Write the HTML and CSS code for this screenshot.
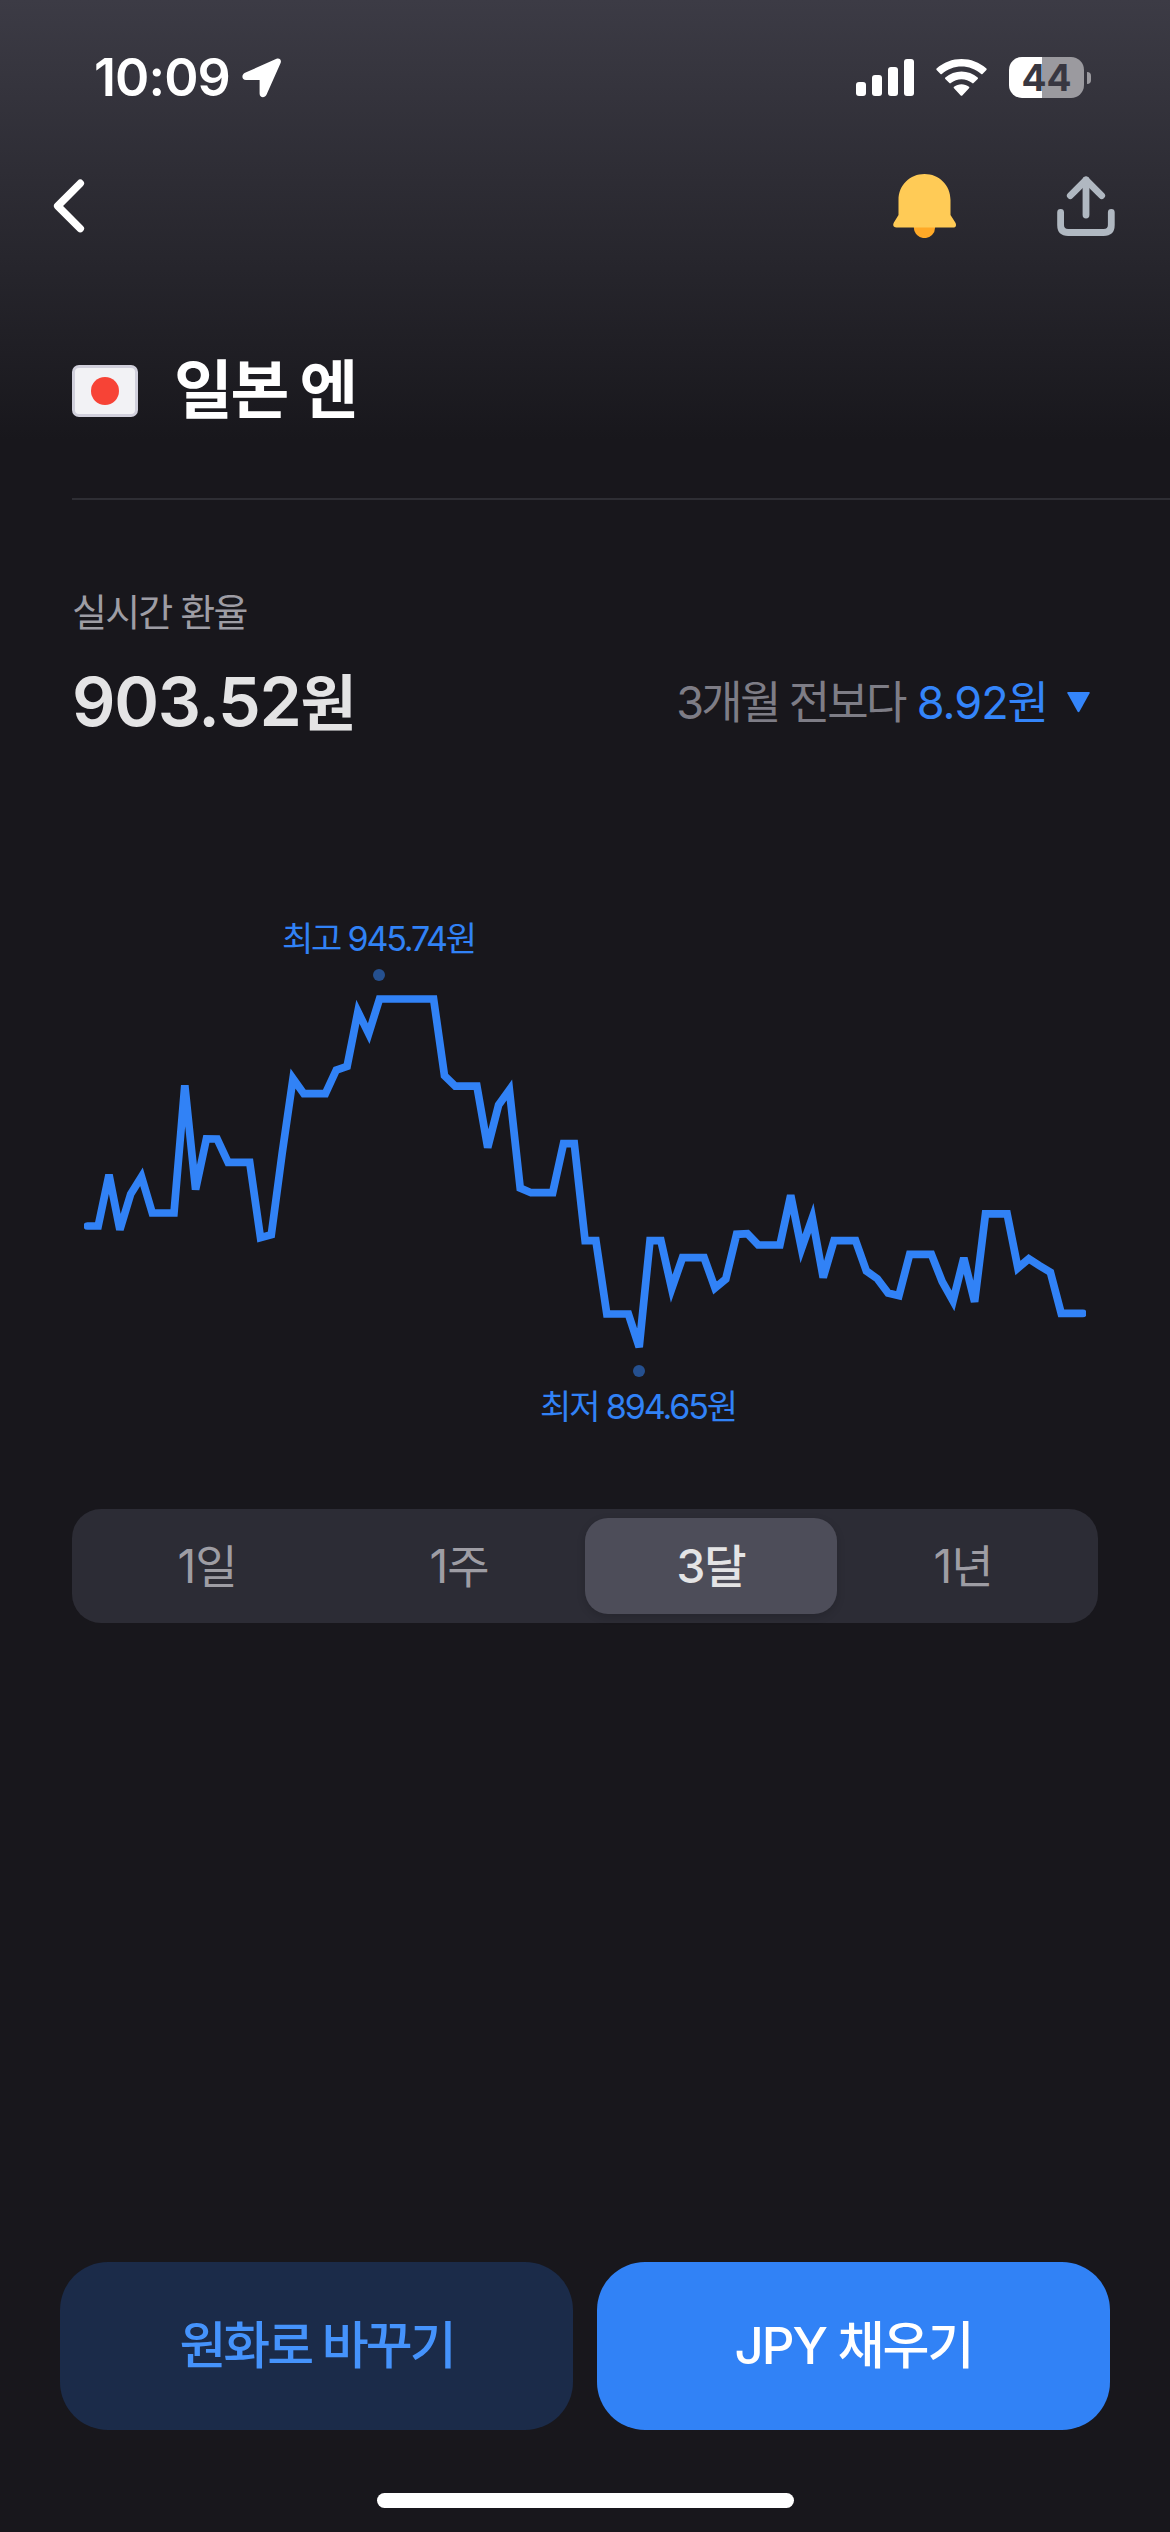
FILE: index.html
```html
<!DOCTYPE html>
<html lang="ko">
<head>
	<meta charset="utf-8">
	<meta name="viewport" content="width=device-width">
	<title>일본 엔</title>
	<link rel="stylesheet" href="styles.css">
</head>
<body>
	<div class="screen">
		<!-- status bar -->
		<div class="status-bar">
			<span class="time">10:09</span>
			<svg class="location" width="40" height="40" viewBox="0 0 40 40">
				<path d="M34.500 .8 L3 14.800 C-.8 16.500 -.4 22 4 22 L17.600 22 L17.600 35.500 C17.600 40 22.800 40.500 24.500 36.800 L38.600 5 C39.800 2.200 37.500 -.4 34.500 .8Z" fill="#fff"/>
			</svg>
			<div class="status-icons">
				<svg width="58" height="37" viewBox="0 0 58 37" fill="#fff">
					<rect x="0" y="23" width="10" height="14" rx="3"/>
					<rect x="16" y="16" width="10" height="21" rx="3"/>
					<rect x="32" y="8" width="10" height="29" rx="3"/>
					<rect x="48" y="0" width="10" height="37" rx="3"/>
				</svg>
				<svg width="51" height="37" viewBox="0 0 51 37" fill="#fff">
					<path d="M.6 9.600 C14.500 -3.200 36.500 -3.200 50.400 9.600 Q51 10.200 50.400 10.900 L46.500 15 Q45.900 15.600 45.200 15 C34 5 17 5 5.800 15 Q5.100 15.600 4.500 15 L.6 10.900 Q0 10.200 .6 9.600Z"/>
					<path d="M9.300 18.600 C18.300 10.500 32.700 10.500 41.700 18.600 Q42.400 19.300 41.700 20 L37.600 24.100 Q36.900 24.700 36.200 24.100 C30 18.800 21 18.800 14.800 24.100 Q14.100 24.700 13.400 24.100 L9.300 20 Q8.600 19.300 9.300 18.600Z"/>
					<path d="M18 27.800 C22.300 24.400 28.700 24.400 33 27.800 Q33.700 28.500 33 29.200 L26.300 36.400 Q25.500 37.200 24.700 36.400 L18 29.200 Q17.300 28.500 18 27.800Z"/>
				</svg>
				<div class="battery">
					<div class="battery-body">44</div>
					<div class="battery-tip"></div>
				</div>
			</div>
		</div>

		<!-- navigation -->
		<div class="nav">
			<svg width="34" height="56" viewBox="0 0 34 56" fill="none" stroke="#fff" stroke-width="7.500" stroke-linecap="round" stroke-linejoin="round">
				<path d="M28.300 5.300 L5.700 28 L28.300 50.600"/>
			</svg>
			<div class="nav-actions">
				<svg width="64" height="64" viewBox="0 0 64 64">
					<circle cx="31.500" cy="53.500" r="10.600" fill="#ffa927"/>
					<path d="M5.500 26 C5.500 11 17 0 31.500 0 S57.500 11 57.500 26 V41 L62.300 48.500 C64 51.500 62.500 53.600 60 53.600 H3.500 C.8 53.600 -.8 51.500 .9 48.500 L5.500 41Z" fill="#ffcb56"/>
				</svg>
				<svg width="60" height="62" viewBox="0 0 60 62" fill="none" stroke="#b0b8c1" stroke-width="6.800" stroke-linecap="round" stroke-linejoin="round">
					<path d="M4.600 37.500 V50 Q4.600 57.500 12.200 57.500 H47.600 Q55.300 57.500 55.300 50 V37.500"/>
					<path d="M30 40 V5"/>
					<path d="M14.300 20.700 L30 5 L45.700 20.700"/>
				</svg>
			</div>
		</div>

		<div class="title">
			<div class="flag"><div class="flag-sun"></div></div>
			<h1>일본 엔</h1>
		</div>

		<!-- current rate -->
		<div class="rate">
			<div class="rate-label">실시간 환율</div>
			<div class="rate-row">
				<div class="rate-value">903.52<span class="won">원</span></div>
				<div class="rate-diff">
					<span>3개월 전보다</span>
					<span class="down">8.92원</span>
					<svg width="23" height="21" viewBox="0 0 23 21"><path d="M1.200 0 H21.800 Q23.300 0 22.600 1.300 L12.500 19.500 Q11.500 21 10.500 19.500 L.4 1.300 Q-.3 0 1.200 0Z" fill="#3485fa"/></svg>
				</div>
			</div>
		</div>

		<!-- 3 month chart, one point per day -->
		<svg class="chart" width="1002" height="540" viewBox="84 900 1002 540">
			<text x="379.500" y="951" textLength="195">최고 945.74원</text>
			<circle cx="379" cy="975" r="6"/>
			<polyline points="87.4,1226 98.2,1226 109,1174.8 119.9,1229.7 130.7,1194 141.5,1176.8 152.3,1213 174,1213 184.8,1085.3 195.6,1189.5 206.4,1138.8 217.2,1139 228.1,1162.3 249.7,1162.3 260.5,1237.7 271.3,1234.7 282.2,1153 293,1078.5 303.8,1093.7 325.4,1093.7 336.3,1070 347.1,1066.3 357.9,1011.7 368.7,1033.7 379.5,999 433.6,999 444.5,1075.7 455.3,1086.2 476.9,1086.2 487.7,1147.5 498.6,1105 509.4,1090 520.2,1188 531,1192.7 552.7,1192.7 563.5,1143.7 574.3,1143.7 585.1,1240.7 595.9,1240.7 606.8,1314 628.4,1314 639.2,1347 650,1240.7 660.9,1240.7 671.7,1288.7 682.5,1257.7 704.1,1257.7 715,1288 725.8,1279 736.6,1234.3 747.4,1233.7 758.2,1245 779.9,1245 790.7,1195.3 801.5,1248.7 812.3,1217.9 823.2,1277.5 834,1240.7 855.6,1240.7 866.4,1271 877.3,1278.7 888.1,1293 898.9,1295.7 909.7,1254.3 931.4,1254.3 942.2,1281.7 953,1301 963.8,1258 974.6,1301.8 985.5,1213.8 1007.1,1213.8 1017.9,1268 1028.8,1258.7 1039.6,1265.7 1050.4,1272.3 1061.2,1313.3 1082.9,1313.3"/>
			<circle cx="639" cy="1371" r="6"/>
			<text x="639" y="1419" textLength="198">최저 894.65원</text>
		</svg>

		<div class="periods">
			<div class="period">1일</div>
			<div class="period">1주</div>
			<div class="period active">3달</div>
			<div class="period">1년</div>
		</div>

		<div class="actions">
			<button type="button" class="btn btn-sub">원화로 바꾸기</button>
			<button type="button" class="btn btn-main">JPY 채우기</button>
		</div>
		<div class="home-bar"></div>
	</div>
</body>
</html>
```
FILE: styles.css
```css
* {
	box-sizing: border-box;
}
body {
	margin: 0;
	background: #18171c;
	font-family: Inter, "Noto Sans CJK KR", sans-serif;
}
svg {
	display: block;
	flex: none;
}
.screen {
	display: flex;
	flex-direction: column;
	width: 1170px;
	height: 2532px;
	background: linear-gradient(#3c3b45 0, #18171c 440px);
}

/* status bar */
.status-bar {
	display: flex;
	align-items: center;
	height: 141px;
	padding: 14px 79px 0 94px;
}
.time {
	font-size: 52px;
	font-weight: 600;
	letter-spacing: -0.9px;
	color: #fff;
}
.location {
	margin-left: 12px;
}
.status-icons {
	display: flex;
	align-items: center;
	gap: 22px;
	margin-left: auto;
}
.battery {
	display: flex;
	align-items: center;
	gap: 3px;
}
.battery-body {
	width: 75px;
	height: 41px;
	border-radius: 13px;
	background: linear-gradient(90deg, #fff 33px, #9b9a9f 33px);
	color: #383741;
	font-size: 37px;
	font-weight: 700;
	line-height: 41px;
	text-align: center;
}
.battery-tip {
	width: 4px;
	height: 12px;
	border-radius: 0 4px 4px 0;
	background: #9b9a9f;
}

/* navigation */
.nav {
	display: flex;
	align-items: center;
	justify-content: space-between;
	height: 130px;
	padding: 0 54px 0 52px;
}
.nav-actions {
	display: flex;
	align-items: center;
	gap: 99px;
}
.title {
	display: flex;
	align-items: center;
	height: 229px;
	margin-left: 72px;
	padding-top: 13px;
	border-bottom: 2px solid #2e2e34;
}
.flag {
	display: flex;
	align-items: center;
	justify-content: center;
	width: 66px;
	height: 52px;
	border: 3px solid #d1d0dc;
	border-radius: 7px;
	background: #f2f2f5;
}
.flag-sun {
	width: 28px;
	height: 28px;
	border-radius: 50%;
	background: #f74336;
}
h1 {
	margin: -2px 0 0 36px;
	font-size: 64px;
	font-weight: 700;
	line-height: 80px;
	letter-spacing: -2.5px;
	color: #fff;
}

/* current rate */
.rate {
	padding: 85px 80px 0 72px;
}
.rate-label {
	font-size: 38px;
	line-height: 54px;
	letter-spacing: -1.8px;
	color: #9e9da4;
}
.rate-row {
	display: flex;
	align-items: center;
	justify-content: space-between;
	height: 121px;
}
.rate-value {
	font-size: 68px;
	font-weight: 600;
	letter-spacing: -1.3px;
	color: #e4e4e5;
}
.won {
	font-size: 61px;
}
.rate-diff {
	display: flex;
	align-items: center;
	gap: 12px;
	font-size: 45px;
	letter-spacing: -2.7px;
	color: #7e7d86;
}
.down {
	letter-spacing: -1px;
	color: #3485fa;
}
.rate-diff svg {
	margin: 5px 0 0 7px;
}

/* chart */
.chart {
	margin: 140px 0 0 84px;
	fill: #3182f6;
}
.chart text {
	font-size: 34px;
	text-anchor: middle;
}
.chart circle {
	fill: #25508f;
}
.chart polyline {
	fill: none;
	stroke: #3182f6;
	stroke-width: 7.7;
	stroke-linecap: round;
}

.periods {
	display: grid;
	grid-template-columns: repeat(4, 1fr);
	height: 114px;
	margin: 69px 72px 0;
	padding: 9px;
	border-radius: 29px;
	background: #2c2c35;
}
.period {
	border-radius: 23px;
	font-size: 46px;
	line-height: 96px;
	letter-spacing: -1px;
	text-align: center;
	color: #9e9da4;
}
.period.active {
	background: #4d4d59;
	box-shadow: 0 3px 8px rgba(0, 0, 0, 0.15);
	font-weight: 500;
	color: #e4e4e5;
}

/* bottom buttons */
.actions {
	display: flex;
	gap: 24px;
	margin-top: auto;
	padding: 0 60px;
}
.btn {
	flex: 1;
	height: 168px;
	padding: 0 0 9px;
	border: 0;
	border-radius: 48px;
	font-family: inherit;
	font-size: 51px;
	font-weight: 500;
	letter-spacing: -3px;
}
.btn-sub {
	background: #1b2b49;
	color: #4593fc;
}
.btn-main {
	background: #3182f6;
	color: #fff;
	letter-spacing: -2px;
}
.home-bar {
	width: 417px;
	height: 15px;
	margin: 63px auto 24px;
	border-radius: 8px;
	background: #fff;
}
```
